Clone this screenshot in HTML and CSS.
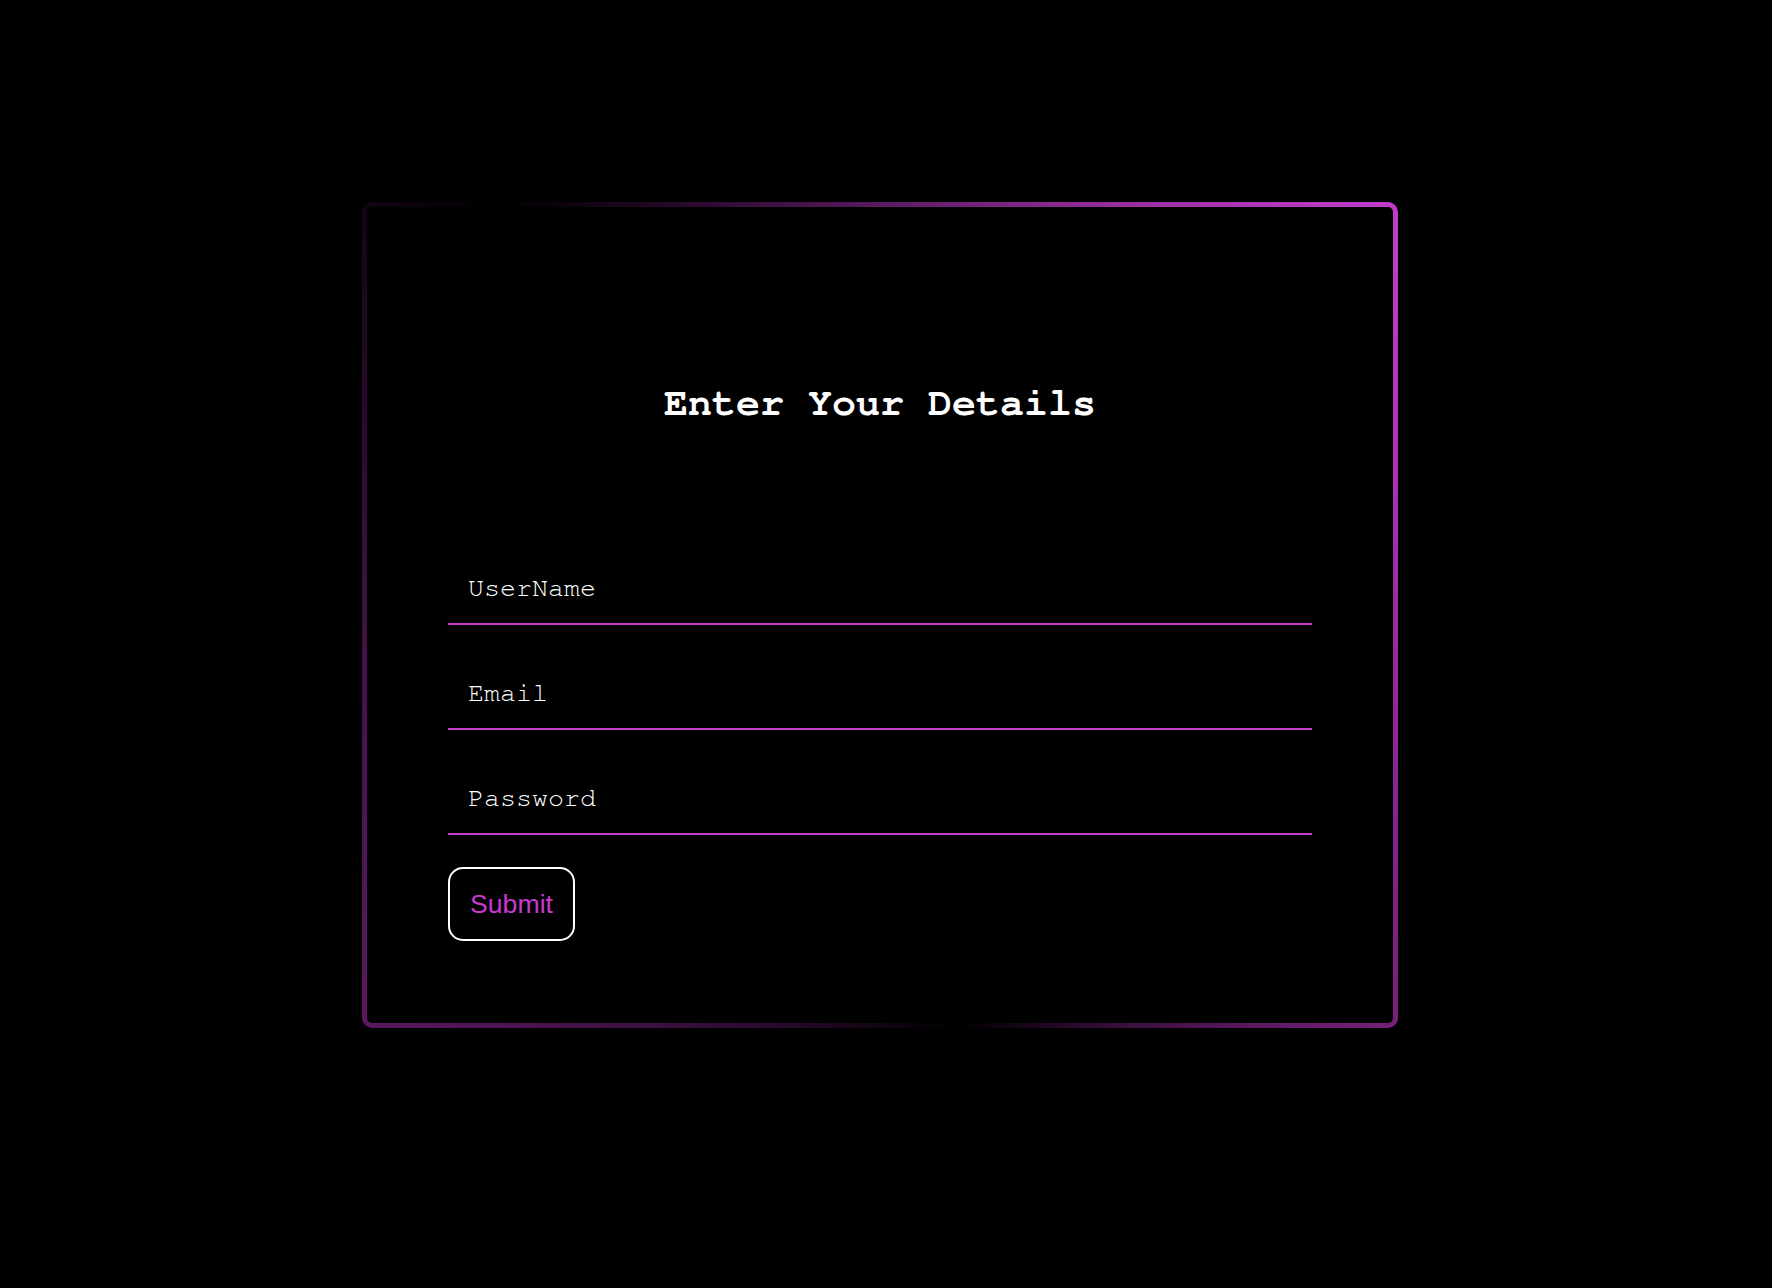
FILE: index.html
```html
<!DOCTYPE html>
<html lang="en">
<head>
<meta charset="utf-8">
<title>Enter Your Details</title>
<link rel="stylesheet" href="styles.css">
</head>
<body>
  <div class="card">
    <h1 class="title">Enter Your Details</h1>
    <form class="form" onsubmit="return false;">
      <input class="field" type="text" placeholder="UserName">
      <input class="field" type="email" placeholder="Email">
      <input class="field" type="password" placeholder="Password">
      <div class="actions">
        <button class="submit" type="submit">Submit</button>
      </div>
    </form>
  </div>
</body>
</html>
```

FILE: styles.css
```css
html, body {
  margin: 0;
  padding: 0;
  background: #000;
  height: 100%;
}

body {
  font-family: "Nimbus Mono PS", "Nimbus Mono L", "FreeMono", "Courier", "Liberation Mono", "Courier New", monospace;
  color: #fff;
}

.card {
  box-sizing: border-box;
  width: 1036px;
  height: 826px;
  margin: 202px 0 0 calc(50% - 524px);
  padding: 80px 81px 82px;
  border: 5px solid transparent;
  border-radius: 10px;
  background:
    linear-gradient(#000, #000) padding-box,
    conic-gradient(from 0deg at 50% 50%,
      #5a1a60 0deg,
      #c23ccb 52deg,
      #9c2ca4 88deg,
      #74207a 129deg,
      #1a051c 160deg,
      #000 169deg,
      #2a0a2e 195deg,
      #5a1860 232deg,
      #3a1040 275deg,
      #1a051c 305deg,
      #000 317deg,
      #2a0a2e 335deg,
      #5a1a60 360deg) border-box;
}

.title {
  margin: 93px 0 127px;
  font-family: "Nimbus Mono PS", "Nimbus Mono L", "FreeMono", "Courier", "Liberation Mono", "Courier New", monospace;
  font-weight: bold;
  font-size: 40px;
  line-height: 46px;
  text-align: center;
  color: #fff;
}

.form {
  display: flex;
  flex-direction: column;
  gap: 33px;
}

.field {
  box-sizing: border-box;
  display: block;
  width: 100%;
  height: 72px;
  margin: 0;
  padding: 20px 20px;
  background: transparent;
  border: none;
  border-bottom: 2px solid #c33cca;
  outline: none;
  color: #fff;
  font-family: "Nimbus Mono PS", "Nimbus Mono L", "FreeMono", "Courier", "Liberation Mono", "Courier New", monospace;
  font-size: 26.67px;
}

.field::placeholder {
  color: #fff;
  opacity: 1;
}

.actions {
  display: flex;
  margin-top: -1px;
}

.submit {
  box-sizing: border-box;
  height: 74px;
  padding: 0 20px;
  background: transparent;
  border: 2px solid #fff;
  border-radius: 15px;
  color: #c83ad0;
  font-family: "Liberation Sans", Arial, sans-serif;
  font-size: 26.67px;
  cursor: pointer;
}
```
